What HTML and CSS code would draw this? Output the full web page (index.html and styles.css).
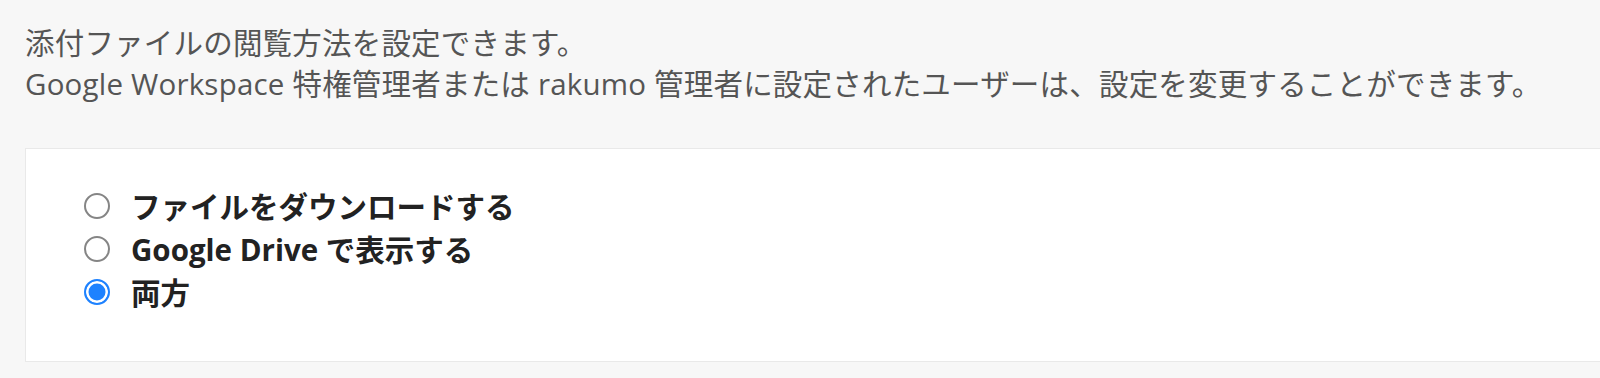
FILE: index.html
```html
<!DOCTYPE html>
<html lang="ja">
<head>
<meta charset="utf-8">
<title>添付ファイルの閲覧方法</title>
<link rel="stylesheet" href="styles.css">
</head>
<body>
<main class="page">
  <div class="desc">
    <p>添付ファイルの閲覧方法を設定できます。</p>
    <p>Google Workspace 特権管理者または rakumo 管理者に設定されたユーザーは、設定を変更することができます。</p>
  </div>
  <section class="card">
    <label class="option"><input type="radio" name="view" class="radio"><span>ファイルをダウンロードする</span></label>
    <label class="option"><input type="radio" name="view" class="radio"><span>Google Drive で表示する</span></label>
    <label class="option"><input type="radio" name="view" class="radio" checked><span>両方</span></label>
  </section>
</main>
</body>
</html>
```

FILE: styles.css
```css
html, body {
  margin: 0;
  padding: 0;
  background: #f7f7f7;
  overflow: hidden;
}
.page {
  padding: 22px 0 0 25px;
  font-family: "Open Sans", "Noto Sans CJK JP", sans-serif;
  font-size: 29.5px;
}
.desc {
  color: #555555;
  line-height: 41px;
  letter-spacing: 0.2px;
}
.desc p {
  margin: 0;
}
.card {
  margin-top: 44px;
  width: 1620px;
  box-sizing: border-box;
  background: #ffffff;
  border: 1px solid #e9e9e9;
  padding: 35px 0 48px 58px;
  display: flex;
  flex-direction: column;
}
.option {
  display: flex;
  align-items: center;
  height: 43px;
  font-weight: 700;
  color: #222222;
}
.radio {
  appearance: none;
  -webkit-appearance: none;
  margin: 0 21px 0 0;
  width: 26px;
  height: 26px;
  box-sizing: border-box;
  border: 2.5px solid #858585;
  border-radius: 50%;
  background: #ffffff;
  flex: none;
}
.radio:checked {
  border-color: #1e82ff;
  background: #1e82ff;
  box-shadow: inset 0 0 0 2.5px #ffffff;
}
```
